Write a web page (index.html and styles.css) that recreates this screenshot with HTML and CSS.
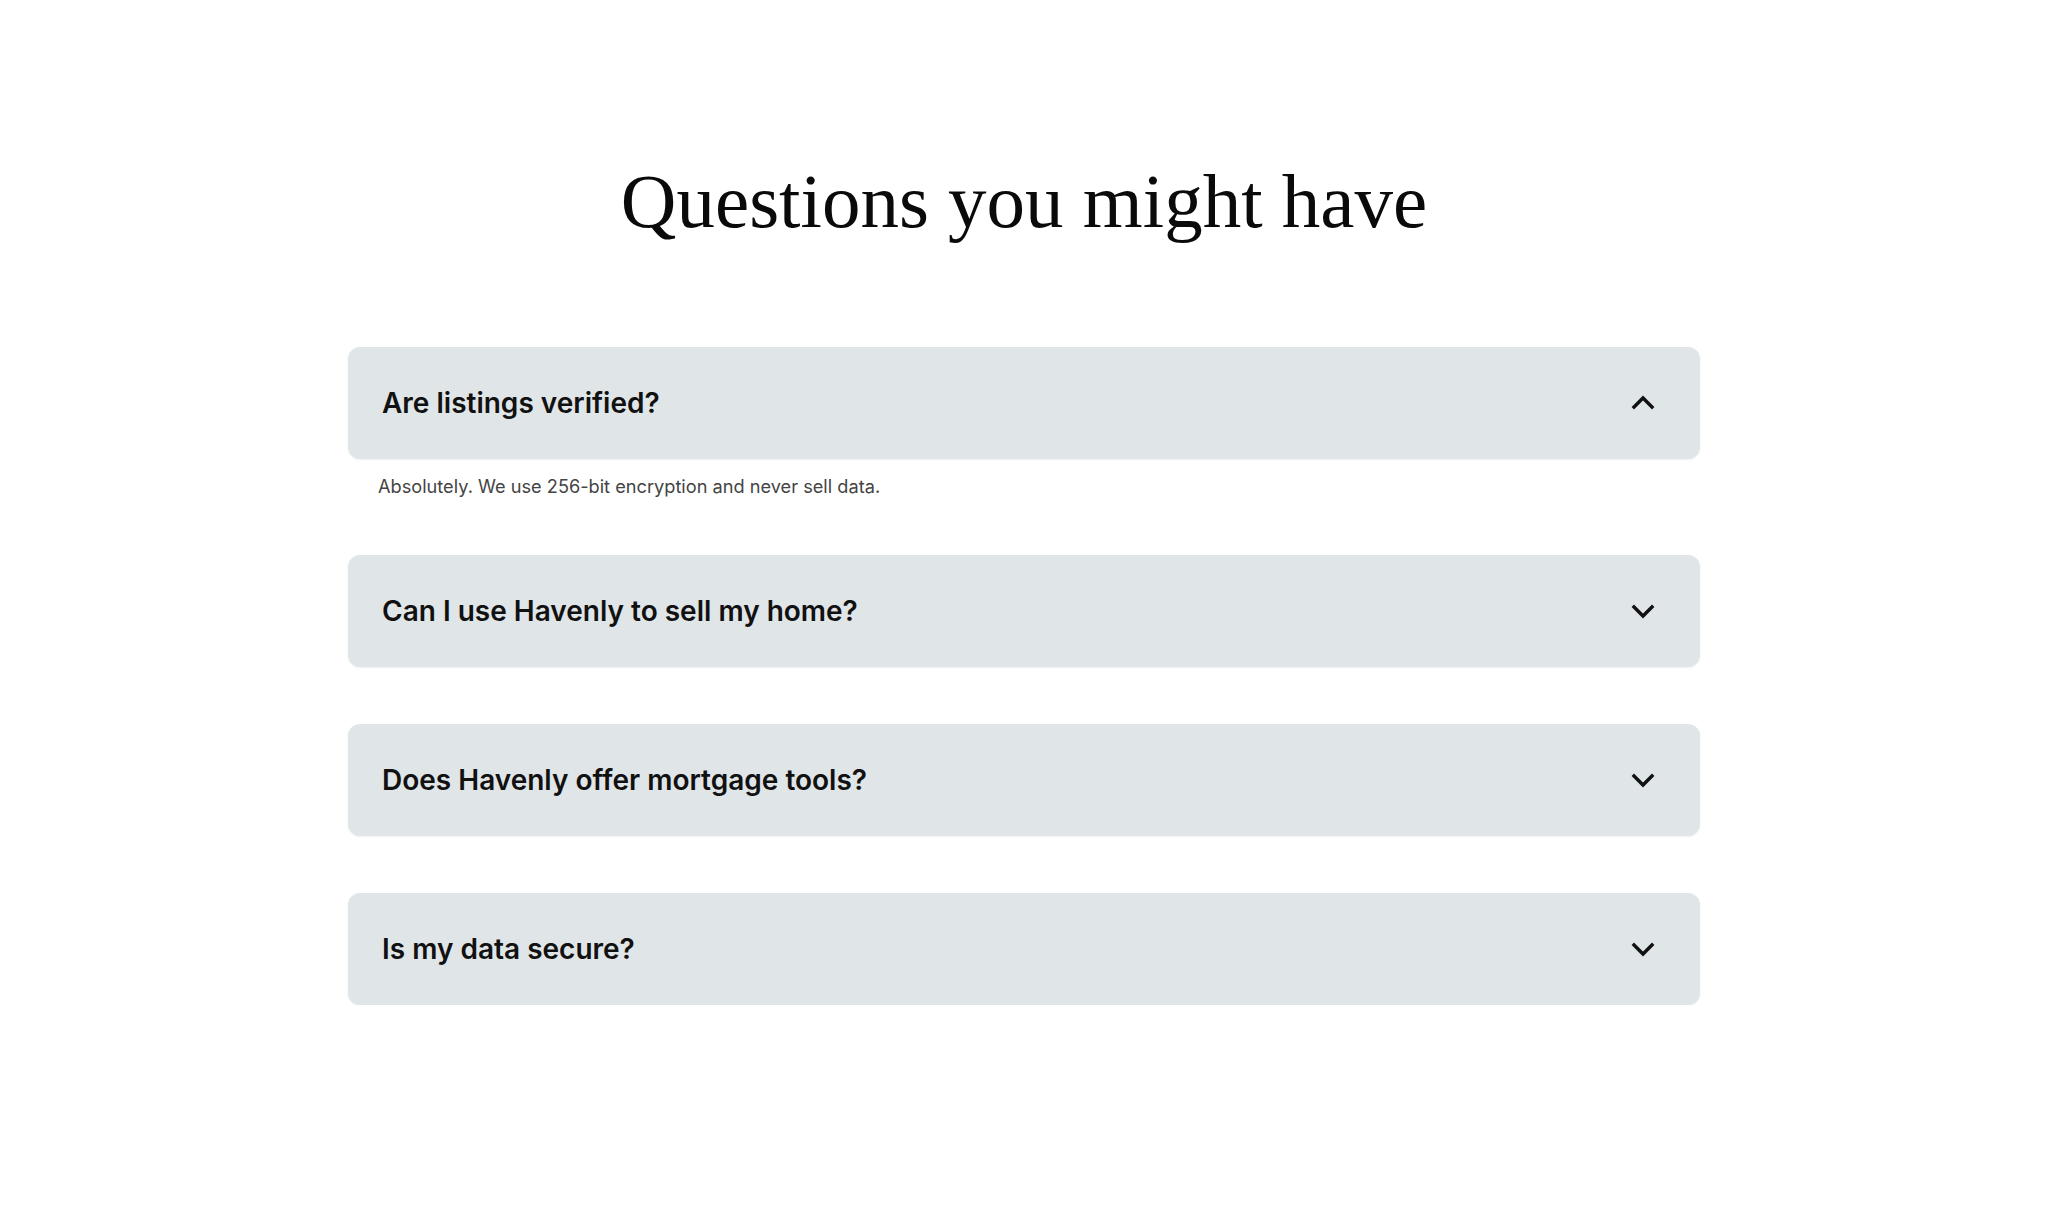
FILE: index.html
```html
<!DOCTYPE html>
<html lang="en">
<head>
    <meta charset="UTF-8">
    <meta name="viewport" content="width=device-width, initial-scale=1.0">
    <title>Havenly - FAQ</title>
    <link rel="stylesheet" href="styles.css">
</head>
<body>

    <section class="faq">
        <h1 class="faq-title">Questions you might have</h1>

        <div class="faq-list">
            <div class="faq-item open">
                <button class="faq-question" onclick="toggleItem(this)">
                    <span>Are listings verified?</span>
                    <svg class="chevron" width="24" height="24" viewBox="0 0 24 24" fill="none" stroke="currentColor" stroke-width="3.4" stroke-linecap="square"><path d="M3 8l9 9 9-9"/></svg>
                </button>
                <p class="faq-answer">Absolutely. We use 256-bit encryption and never sell data.</p>
            </div>

            <div class="faq-item">
                <button class="faq-question" onclick="toggleItem(this)">
                    <span>Can I use Havenly to sell my home?</span>
                    <svg class="chevron" width="24" height="24" viewBox="0 0 24 24" fill="none" stroke="currentColor" stroke-width="3.4" stroke-linecap="square"><path d="M3 8l9 9 9-9"/></svg>
                </button>
                <p class="faq-answer">Yes. List your property in minutes and reach verified buyers.</p>
            </div>

            <div class="faq-item">
                <button class="faq-question" onclick="toggleItem(this)">
                    <span>Does Havenly offer mortgage tools?</span>
                    <svg class="chevron" width="24" height="24" viewBox="0 0 24 24" fill="none" stroke="currentColor" stroke-width="3.4" stroke-linecap="square"><path d="M3 8l9 9 9-9"/></svg>
                </button>
                <p class="faq-answer">We offer calculators and connect you with trusted lenders.</p>
            </div>

            <div class="faq-item">
                <button class="faq-question" onclick="toggleItem(this)">
                    <span>Is my data secure?</span>
                    <svg class="chevron" width="24" height="24" viewBox="0 0 24 24" fill="none" stroke="currentColor" stroke-width="3.4" stroke-linecap="square"><path d="M3 8l9 9 9-9"/></svg>
                </button>
                <p class="faq-answer">Absolutely. We use 256-bit encryption and never sell data.</p>
            </div>
        </div>
    </section>

    <script>
        function toggleItem(button) {
            button.parentElement.classList.toggle('open');
        }
    </script>
</body>
</html>
```

FILE: styles.css
```css
body {
    margin: 0;
    background-color: #fff;
    font-family: Inter, "Noto Sans", Arial, sans-serif;
    color: #111;
}

.faq {
    width: 1352px;
    margin: 0 auto;
    padding-top: 156px;
}

.faq-title {
    margin: 0 0 101px;
    font-family: "Liberation Serif", "Times New Roman", serif;
    font-size: 77px;
    font-weight: 400;
    line-height: 90px;
    text-align: center;
    color: #0a0a0a;
}

.faq-list {
    display: flex;
    flex-direction: column;
    gap: 57px;
}

.faq-question {
    width: 100%;
    display: flex;
    justify-content: space-between;
    align-items: center;
    padding: 39px 45px 39px 34px;
    border: none;
    border-radius: 12px;
    background-color: #e0e5e8;
    box-shadow: 0 1px 2px rgba(0, 0, 0, 0.06);
    font-family: inherit;
    font-size: 28px;
    font-weight: 600;
    line-height: 34px;
    color: #111;
    text-align: left;
    cursor: pointer;
}

.chevron {
    flex-shrink: 0;
    color: #111;
}

.faq-item.open .chevron {
    transform: rotate(180deg);
}

.faq-answer {
    display: none;
    margin: 15px 0 0;
    padding-left: 30px;
    font-size: 18.2px;
    line-height: 24px;
    color: #444;
}

.faq-item.open .faq-answer {
    display: block;
}
```
